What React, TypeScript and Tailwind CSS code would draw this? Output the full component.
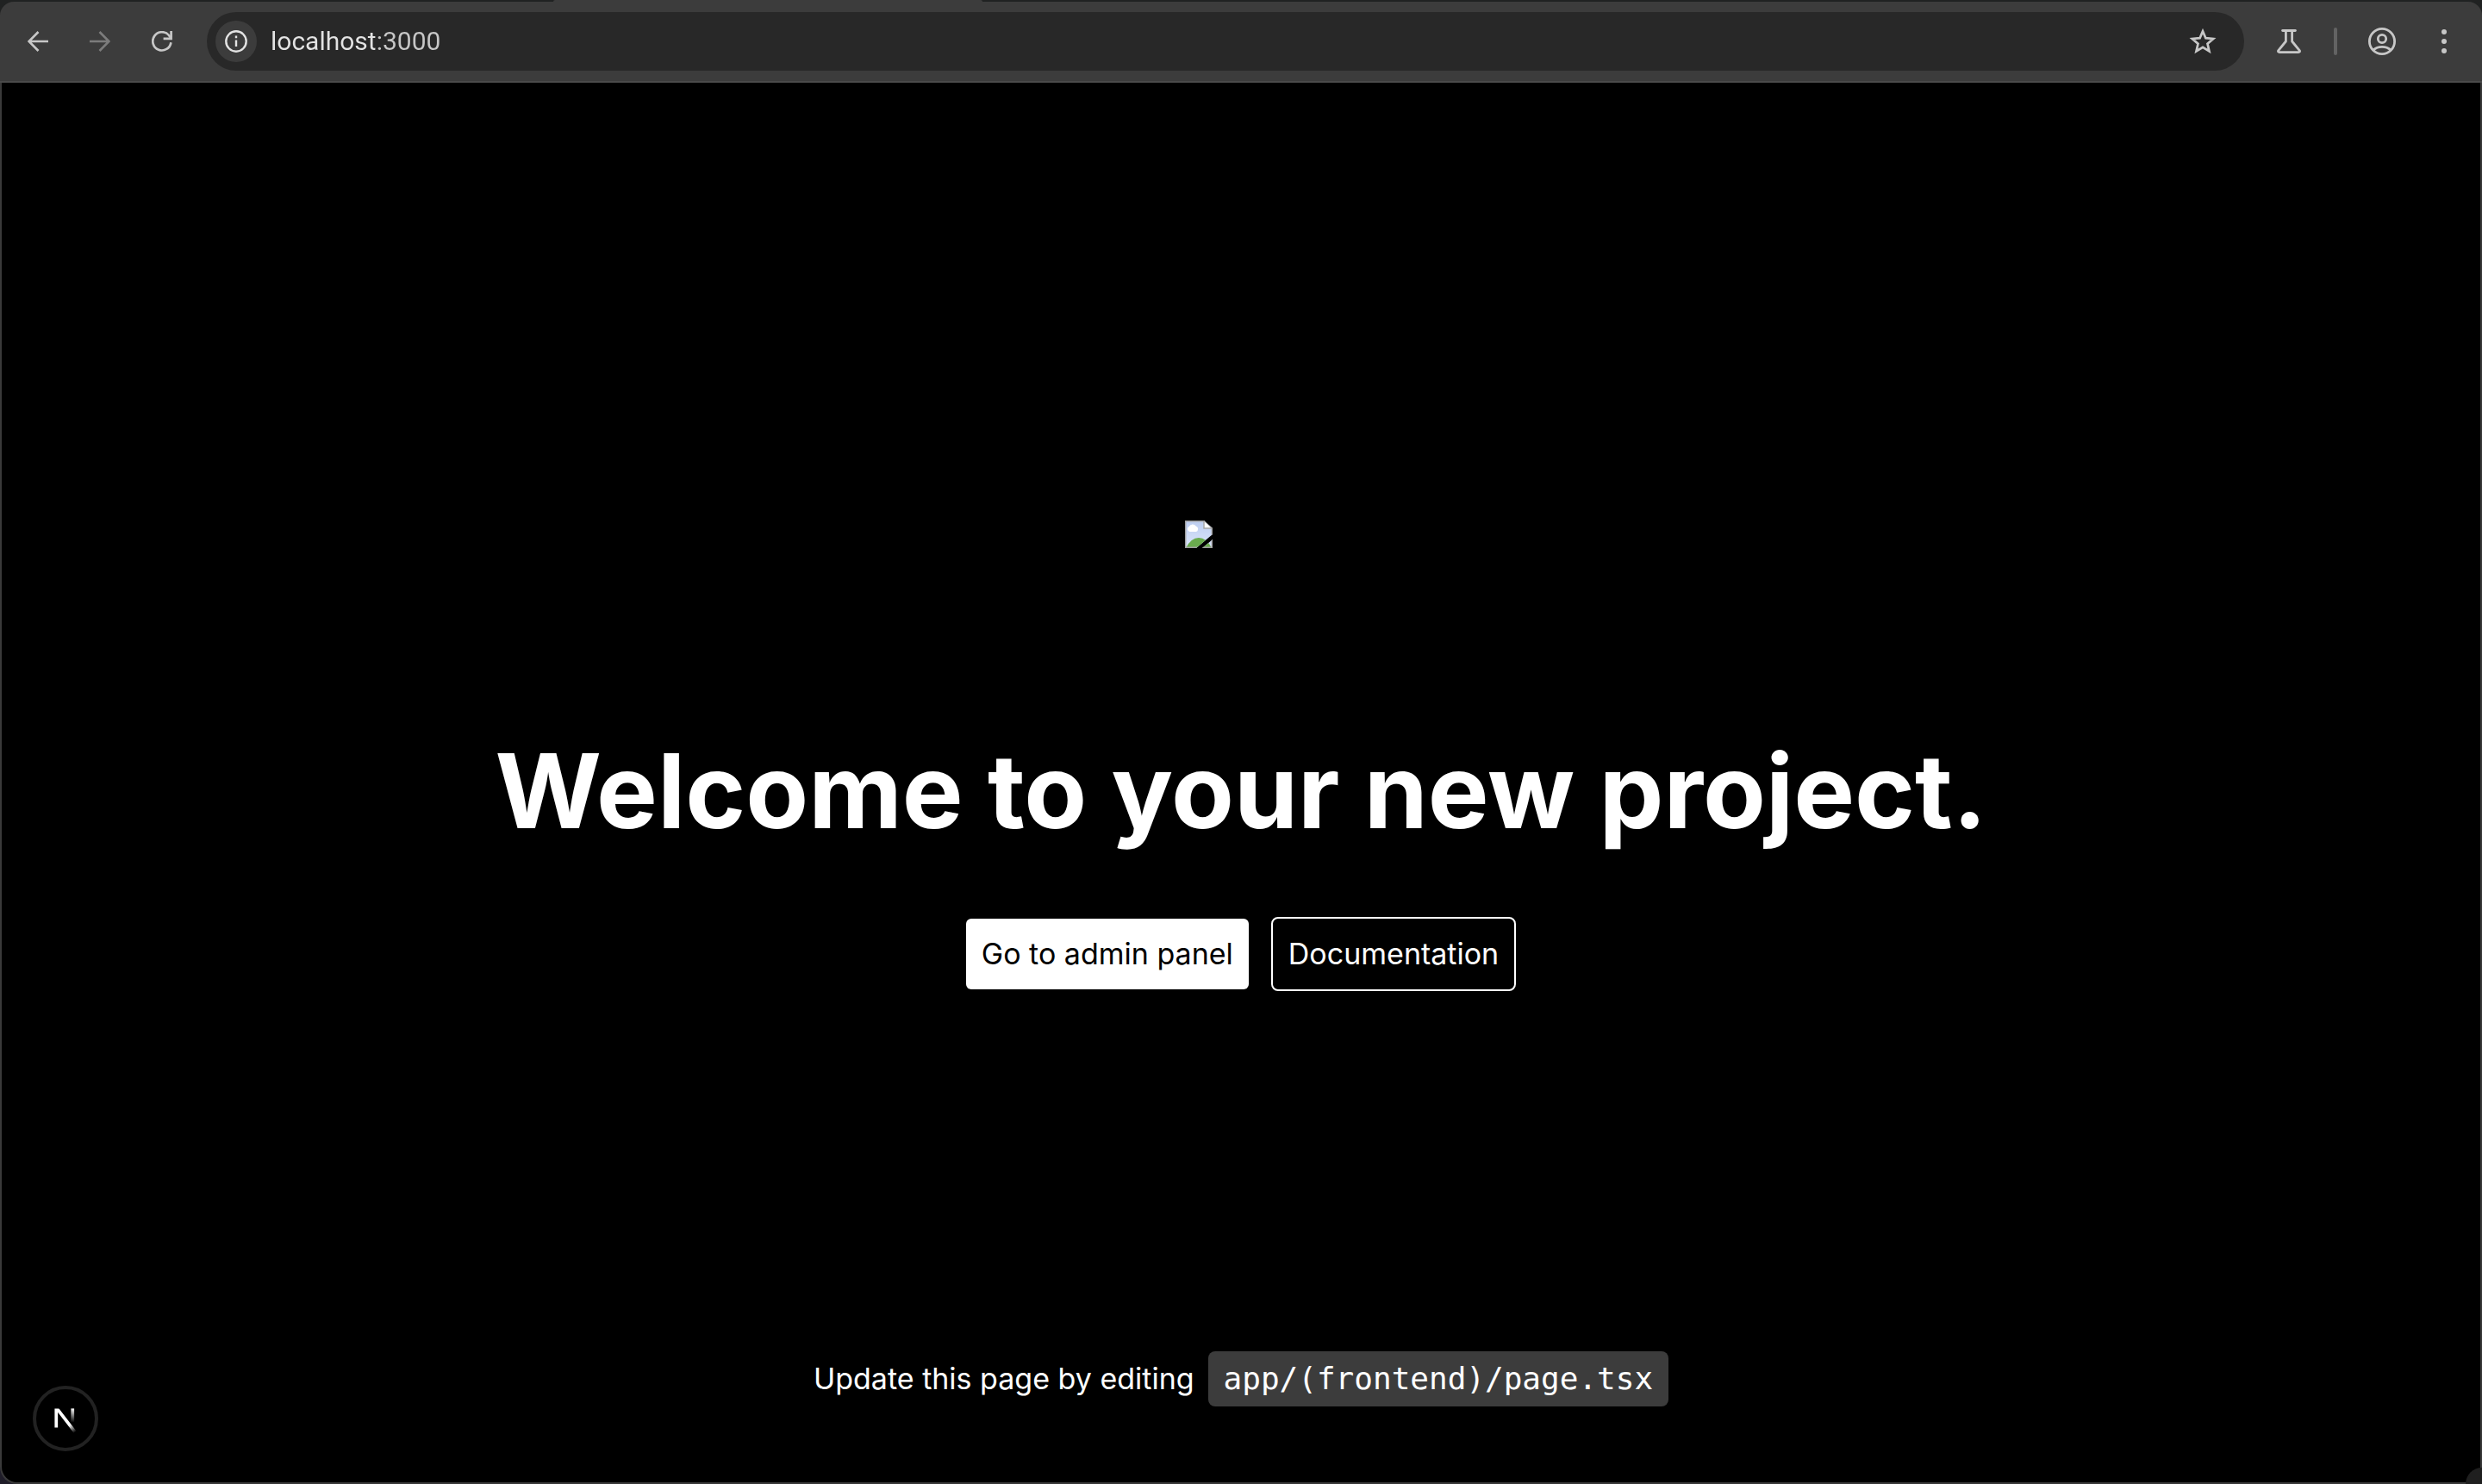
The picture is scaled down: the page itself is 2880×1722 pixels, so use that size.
import React from 'react'

function BackIcon() {
  return (
    <svg viewBox="0 0 24 24" className="size-6" fill="none" stroke="currentColor" strokeWidth="2.6">
      <path d="M24 12H2M12.5 1 1.6 12l10.9 11" />
    </svg>
  )
}

function ForwardIcon() {
  return (
    <svg viewBox="0 0 24 24" className="size-6" fill="none" stroke="currentColor" strokeWidth="2.6">
      <path d="M0 12h22M11.5 1l10.9 11-10.9 11" />
    </svg>
  )
}

function ReloadIcon() {
  return (
    <svg viewBox="0 0 24 24" className="size-6" fill="none" stroke="currentColor" strokeWidth="2.7">
      <path d="M22.4 13.2A10.6 10.6 0 1 1 20 5l2 2.8" />
      <path d="M22.6 0v8.8h-9" />
    </svg>
  )
}

function InfoIcon() {
  return (
    <svg viewBox="0 0 26 26" className="size-[26px]" fill="none" stroke="currentColor" strokeWidth="2.4">
      <circle cx="13" cy="13" r="11.7" />
      <path d="M13 11.5V19M13 6.6v2.6" />
    </svg>
  )
}

function StarIcon() {
  return (
    <svg viewBox="0 0 32 30" className="h-[30px] w-8" fill="none" stroke="currentColor" strokeWidth="2.7">
      <path d="M16 3.2 19.4 11.2 28.2 12 21.5 17.8 23.5 26.4 16 21.8 8.5 26.4 10.5 17.8 3.8 12 12.6 11.2Z" />
    </svg>
  )
}

function FlaskIcon() {
  return (
    <svg viewBox="0 0 28 28" className="size-7" fill="none" stroke="currentColor" strokeWidth="2.8" strokeLinejoin="round">
      <path d="M6.6 1.5h14.8" strokeLinecap="round" />
      <path d="M10.4 2v12L1.7 24.6q-.8 2 1.3 2h22q2.1 0 1.3-2L17.6 14V2" />
    </svg>
  )
}

function ProfileIcon() {
  return (
    <svg viewBox="0 0 32 32" className="size-8" fill="none" stroke="currentColor" strokeWidth="2.8">
      <circle cx="16" cy="16" r="14.6" />
      <circle cx="16" cy="13" r="4.7" />
      <path d="M5.8 26.2Q10 22.4 16 22.4t10.2 3.8" />
    </svg>
  )
}

function MoreIcon() {
  return (
    <svg viewBox="0 0 8 28" className="h-7 w-2" fill="currentColor">
      <circle cx="4" cy="3" r="3" />
      <circle cx="4" cy="14" r="3" />
      <circle cx="4" cy="25" r="3" />
    </svg>
  )
}

function MissingImage() {
  return (
    <svg viewBox="0 0 32 32" className="size-8" role="img" aria-label="Logo">
      <defs>
        <linearGradient id="sky" x1="0" y1="0" x2="0" y2="1">
          <stop offset="0" stopColor="#bccdf0" />
          <stop offset="1" stopColor="#dbe5fa" />
        </linearGradient>
        <clipPath id="sheet">
          <path d="M0 0h22l10 9v7L13 32H0ZM32 22v10H20Z" />
        </clipPath>
      </defs>
      <g clipPath="url(#sheet)">
        <path d="M0 0h32v32H0Z" fill="url(#sky)" />
        <path d="M1 32Q7 20 16 20t15 12Z" fill="#6aab4e" />
        <path d="M5.500 13a3.200 3.200 0 0 1-.8-6 4.800 4.800 0 0 1 8-.6A3.500 3.500 0 0 1 13 13Z" fill="#fff" />
        <path d="M22 0v9h10Z" fill="#fff" />
        <path d="M22 0v9h10" fill="none" stroke="#a8a8a8" strokeWidth="1.5" />
        <path d="M.7 0v32M0 .7h22M31.3 9v23M0 31.3h32" stroke="#a0a0a0" strokeWidth="1.4" />
        <path d="M22 0 32 9" stroke="#a0a0a0" strokeWidth="1.4" />
      </g>
    </svg>
  )
}

function NextLogo() {
  return (
    <svg viewBox="0 0 34 34" className="size-[68px]" fill="none">
      <defs>
        <linearGradient id="diagonal" gradientUnits="userSpaceOnUse" x1="9.955" y1="11.122" x2="15.478" y2="17.967">
          <stop stopColor="#fff" />
          <stop offset="0.604" stopColor="#fff" stopOpacity="0" />
        </linearGradient>
        <linearGradient id="upright" gradientUnits="userSpaceOnUse" x1="11.822" y1="1.4" x2="11.793" y2="9.625">
          <stop stopColor="#fff" />
          <stop offset="1" stopColor="#fff" stopOpacity="0" />
        </linearGradient>
        <clipPath id="crop">
          <path d="M0 1.5h20V20H0Z" />
        </clipPath>
      </defs>
      <g transform="translate(9.3 9.7)">
        <path d="M13.3 15.2 2.34 1v11.6" stroke="url(#diagonal)" strokeWidth="1.86" clipPath="url(#crop)" />
        <path d="M11.825 1.5v11.6" stroke="url(#upright)" strokeWidth="1.86" />
      </g>
    </svg>
  )
}

function Toolbar() {
  return (
    <header className="bg-[#202222]">
      <div className="mr-[60.4%] ml-[22.3%] h-0.5 rounded-t-sm bg-[#3c3c3c]" />
      <div className="flex h-[94px] items-center rounded-t-2xl border-b-2 border-[#4a4a4a] bg-[#3c3c3c] pr-10 pl-8 text-[#c7c7c7]">
        <nav className="flex gap-12" aria-label="History">
          <button aria-label="Back"><BackIcon /></button>
          <button aria-label="Forward" disabled className="text-[#7c7c7c]"><ForwardIcon /></button>
          <button aria-label="Reload"><ReloadIcon /></button>
        </nav>
        <div className="ml-10 flex h-[68px] grow items-center rounded-full bg-[#282828] pr-8 pl-2.5">
          <button aria-label="Site information" className="flex size-12 items-center justify-center rounded-full bg-[#3c3c3c] text-[#e3e3e3]">
            <InfoIcon />
          </button>
          <input
            aria-label="Address"
            defaultValue="localhost:3000"
            className="ml-4 min-w-0 grow bg-linear-to-r from-[#e3e3e3] from-[121px] to-[#c7c7c7] to-[121px] bg-clip-text font-['Roboto',sans-serif] text-[30px] leading-9 text-transparent outline-none"
          />
          <button aria-label="Bookmark this page"><StarIcon /></button>
        </div>
        <button aria-label="Labs" className="ml-[38px]"><FlaskIcon /></button>
        <span className="mr-9 ml-[38px] h-8 w-1 rounded-full bg-[#636363]" />
        <button aria-label="Profile"><ProfileIcon /></button>
        <button aria-label="More options" className="ml-[52px]"><MoreIcon /></button>
      </div>
    </header>
  )
}

export default function App() {
  return (
    <div className="flex min-h-screen flex-col overflow-hidden bg-[#1f1d29] font-['Inter',sans-serif] text-[34px] leading-[64px] text-white">
      <Toolbar />
      <div className="relative flex grow flex-col items-center rounded-b-[20px] border-x-2 border-b-2 border-[#3a3a3a] bg-black pt-[90px] pb-[88px]">
        <main className="flex grow flex-col items-center justify-center">
          <div className="size-[130px]"><MissingImage /></div>
          <h1 className="mt-[114px] text-center text-[119px] leading-[140px] font-bold">Welcome to your new project.</h1>
          <div className="mt-[76px] flex items-center gap-[26px]">
            <a href="#admin" className="rounded-md bg-white px-[18px] py-[9px] text-black">Go to admin panel</a>
            <a href="#docs" className="rounded-lg border-2 border-white px-[18px] py-[9px]">Documentation</a>
          </div>
        </main>
        <footer className="flex items-center gap-4">
          <p>Update this page by editing</p>
          <code className="rounded-lg bg-[#3c3c3c] px-[18px] font-['DejaVu_Sans_Mono',monospace] text-[36px]">app/(frontend)/page.tsx</code>
        </footer>
        <button aria-label="Open Next.js Dev Tools" className="absolute bottom-9 left-9 rounded-full border-4 border-[#222222] bg-black">
          <NextLogo />
        </button>
        <span className="absolute -right-0.5 -bottom-0.5 size-[19px] rounded-tl-full bg-[#1f1f1f]" />
      </div>
    </div>
  )
}
